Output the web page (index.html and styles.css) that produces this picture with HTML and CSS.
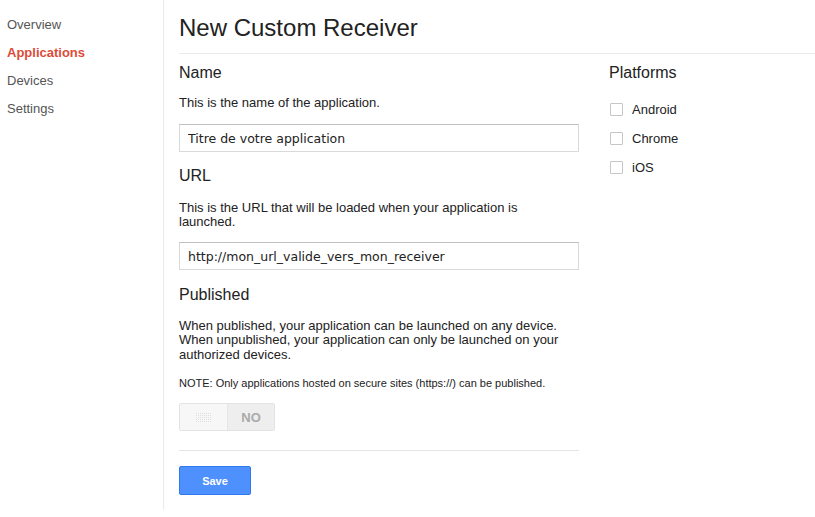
FILE: index.html
```html
<!DOCTYPE html>
<html>
<head>
<meta charset="utf-8">
<link rel="stylesheet" href="styles.css">
</head>
<body>
<div class="page">
  <nav class="sidebar">
    <a class="nav-item">Overview</a>
    <a class="nav-item active">Applications</a>
    <a class="nav-item">Devices</a>
    <a class="nav-item">Settings</a>
  </nav>
  <main class="main">
    <header class="header">
      <h1 class="title">New Custom Receiver</h1>
    </header>
    <div class="content">
      <form class="form">
        <h2 class="section-title">Name</h2>
        <p class="desc">This is the name of the application.</p>
        <input class="text-input" type="text" value="Titre de votre application">

        <h2 class="section-title gap">URL</h2>
        <p class="desc desc-url">This is the URL that will be loaded when your application is launched.</p>
        <input class="text-input input-url" type="text" value="http://mon_url_valide_vers_mon_receiver">

        <h2 class="section-title gap gap-pub">Published</h2>
        <p class="desc desc-pub">When published, your application can be launched on any device. When unpublished, your application can only be launched on your authorized devices.</p>
        <p class="note">NOTE: Only applications hosted on secure sites (https://) can be published.</p>
        <div class="toggle">
          <div class="toggle-knob"><span class="grip"></span></div>
          <div class="toggle-label">NO</div>
        </div>
        <div class="divider"></div>
        <button class="save" type="button">Save</button>
      </form>
      <aside class="platforms">
        <h2 class="section-title">Platforms</h2>
        <label class="check-row"><span class="checkbox"></span>Android</label>
        <label class="check-row"><span class="checkbox"></span>Chrome</label>
        <label class="check-row"><span class="checkbox"></span>iOS</label>
      </aside>
    </div>
  </main>
</div>
</body>
</html>
```
FILE: styles.css
```css
* { box-sizing: border-box; }
html, body { margin: 0; padding: 0; background: #fff; }
body {
  font-family: Arial, "Liberation Sans", sans-serif;
  color: #222;
  font-size: 13px;
}
.page {
  display: flex;
  height: 510px;
}
.sidebar {
  width: 164px;
  flex: none;
  border-right: 1px solid #ebebeb;
  padding: 11px 0 0 7px;
  display: flex;
  flex-direction: column;
}
.nav-item {
  display: block;
  font-size: 13px;
  line-height: 28px;
  color: #555;
  text-decoration: none;
}
.nav-item.active {
  color: #dd4b39;
  font-weight: bold;
}
.main {
  flex: 1;
  padding-left: 15px;
}
.header {
  border-bottom: 1px solid #ebebeb;
  padding: 13px 0 10px 0;
}
.title {
  margin: 0;
  font-size: 24px;
  line-height: 30px;
  font-weight: normal;
  color: #222;
}
.content {
  display: flex;
  gap: 30px;
}
.form {
  width: 400px;
  flex: none;
  padding-top: 9px;
  display: flex;
  flex-direction: column;
  align-items: flex-start;
}
.section-title {
  margin: 0;
  font-size: 16px;
  line-height: 20px;
  font-weight: normal;
  color: #222;
}
.section-title.gap { margin-top: 14px; }
.section-title.gap-pub { margin-top: 15px; }
.desc {
  margin: 13px 0 0 0;
  max-width: 384px;
  font-size: 13px;
  line-height: 14.5px;
  color: #222;
}
.desc-url { margin-top: 15px; }
.desc-pub { margin-top: 14px; }
.text-input {
  margin-top: 13px;
  width: 400px;
  height: 28px;
  border: 1px solid #d9d9d9;
  border-top-color: #c0c0c0;
  padding: 1px 8px 0 8px;
  font-family: "DejaVu Sans", "Lucida Grande", sans-serif;
  font-size: 12.5px;
  color: #222;
  outline: none;
}
.input-url { margin-top: 12px; }
.note {
  margin: 14px 0 0 0;
  font-size: 11px;
  line-height: 14px;
  color: #222;
}
.toggle {
  margin-top: 13px;
  display: flex;
  width: 96px;
  height: 28px;
  border: 1px solid #e3e3e3;
  border-radius: 2px;
  overflow: hidden;
}
.toggle-knob {
  width: 48px;
  background: #f7f7f7;
  border-right: 1px solid #e6e6e6;
  display: flex;
  align-items: center;
  justify-content: center;
}
.grip {
  width: 17px;
  height: 9px;
  background:
    linear-gradient(to right, #f7f7f7 50%, transparent 50%) 0 0 / 2px 2px,
    linear-gradient(to bottom, #dedede 50%, #f7f7f7 50%) 0 0 / 2px 2px;
}
.toggle-label {
  flex: 1;
  background: #eeeeee;
  color: #aaa;
  font-weight: bold;
  font-size: 13px;
  display: flex;
  align-items: center;
  justify-content: center;
}
.divider {
  margin-top: 19px;
  width: 400px;
  border-top: 1px solid #e5e5e5;
}
.save {
  margin-top: 15px;
  width: 72px;
  height: 29px;
  background: #4d90fe;
  border: 1px solid #3079ed;
  border-radius: 2px;
  color: #fff;
  font-family: Arial, "Liberation Sans", sans-serif;
  font-weight: bold;
  font-size: 11px;
  padding: 0;
}
.platforms {
  padding-top: 9px;
  display: flex;
  flex-direction: column;
}
.platforms .section-title { margin-bottom: 12px; }
.check-row {
  display: flex;
  align-items: center;
  height: 29px;
  font-size: 13px;
  color: #222;
}
.checkbox {
  width: 13px;
  height: 13px;
  border: 1px solid #c6c6c6;
  border-radius: 1px;
  margin: 0 9px 0 1px;
  background: #fff;
}
```
